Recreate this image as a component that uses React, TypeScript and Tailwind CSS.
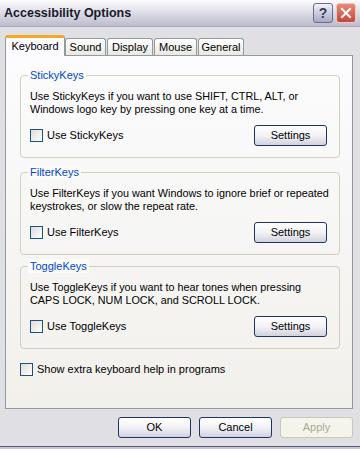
import React from "react";

const font = { fontFamily: '"Liberation Sans", Arial, sans-serif' };

function Checkbox() {
  return (
    <span className="inline-block w-[13px] h-[13px] border border-[#1c5180] bg-linear-to-br from-[#dcdcd7] to-[#ffffff] shrink-0" />
  );
}

function XPButton({ label, disabled }: { label: string; disabled?: boolean }) {
  return (
    <div
      className={
        "h-[21px] w-[73px] flex items-center justify-center rounded-[3px] border text-[11px] " +
        (disabled
          ? "border-[#c9c7ba] bg-[#f5f4ea] text-[#aca899]"
          : "border-[#1d3464] bg-linear-to-b from-[#ffffff] via-[#f2f2f6] to-[#d2d2de] text-black")
      }
    >
      {label}
    </div>
  );
}

function Group({
  title,
  lines,
  check,
  className,
}: {
  title: string;
  lines: string[];
  check: string;
  className?: string;
}) {
  return (
    <div className={"relative border border-[#d0d0bf] rounded-[4px] pl-[9px] pr-[12px] pt-[14px] pb-[11px] " + (className || "")}>
      <span className="absolute -top-[8px] left-[7px] px-[2px] bg-[#fbfbf9] text-[#0046d5] text-[11px] leading-[14px]">
        {title}
      </span>
      <div className="text-[10.8px] leading-[13px] text-black whitespace-nowrap">
        {lines.map((l) => (
          <div key={l}>{l}</div>
        ))}
      </div>
      <div className="flex items-center justify-between mt-[9px]">
        <div className="flex items-center gap-[4px] text-[11px] text-black">
          <Checkbox />
          <span>{check}</span>
        </div>
        <XPButton label="Settings" />
      </div>
    </div>
  );
}

export default function App() {
  return (
    <div style={font} className="w-[360px] h-[449px] bg-[#e0dfe3] flex flex-col overflow-hidden">
      {/* Title bar */}
      <div className="h-[27px] shrink-0 flex items-center justify-between pl-[4px] pr-[4px] bg-linear-to-b from-[#fdfdfe] via-[#dcdce6] to-[#bcbccd] border-b border-[#a8a8b8]">
        <span className="text-[12.5px] font-bold text-[#1a1a2a]">Accessibility Options</span>
        <div className="flex items-center gap-[3px]">
          <div className="w-[20px] h-[20px] rounded-[3px] border border-[#6c6c8a] bg-linear-to-b from-[#f2f2f8] to-[#a9a9c2] flex items-center justify-center text-[14px] font-bold text-[#3a3a5e] leading-none">
            ?
          </div>
          <div className="w-[20px] h-[20px] rounded-[3px] border border-[#f2c8c0] bg-linear-to-b from-[#e88a78] to-[#c3463a] flex items-center justify-center">
            <svg width="12" height="12" viewBox="0 0 12 12">
              <path d="M2 2 L10 10 M10 2 L2 10" stroke="#fff" strokeWidth="2" strokeLinecap="square" />
            </svg>
          </div>
        </div>
      </div>

      {/* Body */}
      <div className="flex-1 flex flex-col pl-[5px] pr-[7px] pt-[8px]">
        {/* Tabs */}
        <div className="flex items-end h-[21px] relative z-10 -mb-[1px] text-[11px] text-black">
          <div className="w-[60px] h-[21px] flex items-center justify-center rounded-t-[3px] border-x border-[#919b9c] border-t-[3px] border-t-[#f5a623] bg-[#fcfcfe] pb-[1px]">
            Keyboard
          </div>
          <div className="w-[41px] h-[17px] mb-[1px] flex items-center justify-center rounded-t-[3px] border-x border-t border-[#919b9c] bg-linear-to-b from-[#ffffff] to-[#e8e8e4]">
            Sound
          </div>
          <div className="ml-[1px] w-[46px] h-[17px] mb-[1px] flex items-center justify-center rounded-t-[3px] border-x border-t border-[#919b9c] bg-linear-to-b from-[#ffffff] to-[#e8e8e4]">
            Display
          </div>
          <div className="ml-[1px] w-[43px] h-[17px] mb-[1px] flex items-center justify-center rounded-t-[3px] border-x border-t border-[#919b9c] bg-linear-to-b from-[#ffffff] to-[#e8e8e4]">
            Mouse
          </div>
          <div className="ml-[1px] w-[46px] h-[17px] mb-[1px] flex items-center justify-center rounded-t-[3px] border-x border-t border-[#919b9c] bg-linear-to-b from-[#ffffff] to-[#e8e8e4]">
            General
          </div>
        </div>

        {/* Panel */}
        <div className="h-[354px] w-[348px] border border-[#919b9c] bg-linear-to-b from-[#fcfcfe] to-[#f1f0eb] pl-[14px] pr-[12px] pt-[19px] flex flex-col">
          <Group
            title="StickyKeys"
            lines={["Use StickyKeys if you want to use SHIFT, CTRL, ALT, or", "Windows logo key by pressing one key at a time."]}
            check="Use StickyKeys"
          />
          <Group
            className="mt-[14px]"
            title="FilterKeys"
            lines={["Use FilterKeys if you want Windows to ignore brief or repeated", "keystrokes, or slow the repeat rate."]}
            check="Use FilterKeys"
          />
          <Group
            className="mt-[11px]"
            title="ToggleKeys"
            lines={["Use ToggleKeys if you want to hear tones when pressing", "CAPS LOCK, NUM LOCK, and SCROLL LOCK."]}
            check="Use ToggleKeys"
          />
          <div className="flex items-center gap-[4px] mt-[12px] text-[11px] text-black">
            <Checkbox />
            <span>Show extra keyboard help in programs</span>
          </div>
        </div>

        {/* Buttons */}
        <div className="flex justify-end gap-[8px] mt-[8px]">
          <XPButton label="OK" />
          <XPButton label="Cancel" />
          <XPButton label="Apply" disabled />
        </div>
      </div>

      {/* Bottom frame */}
      <div className="h-[3px] shrink-0 border-t border-[#585870] bg-[#c8c8d4]" />
    </div>
  );
}
